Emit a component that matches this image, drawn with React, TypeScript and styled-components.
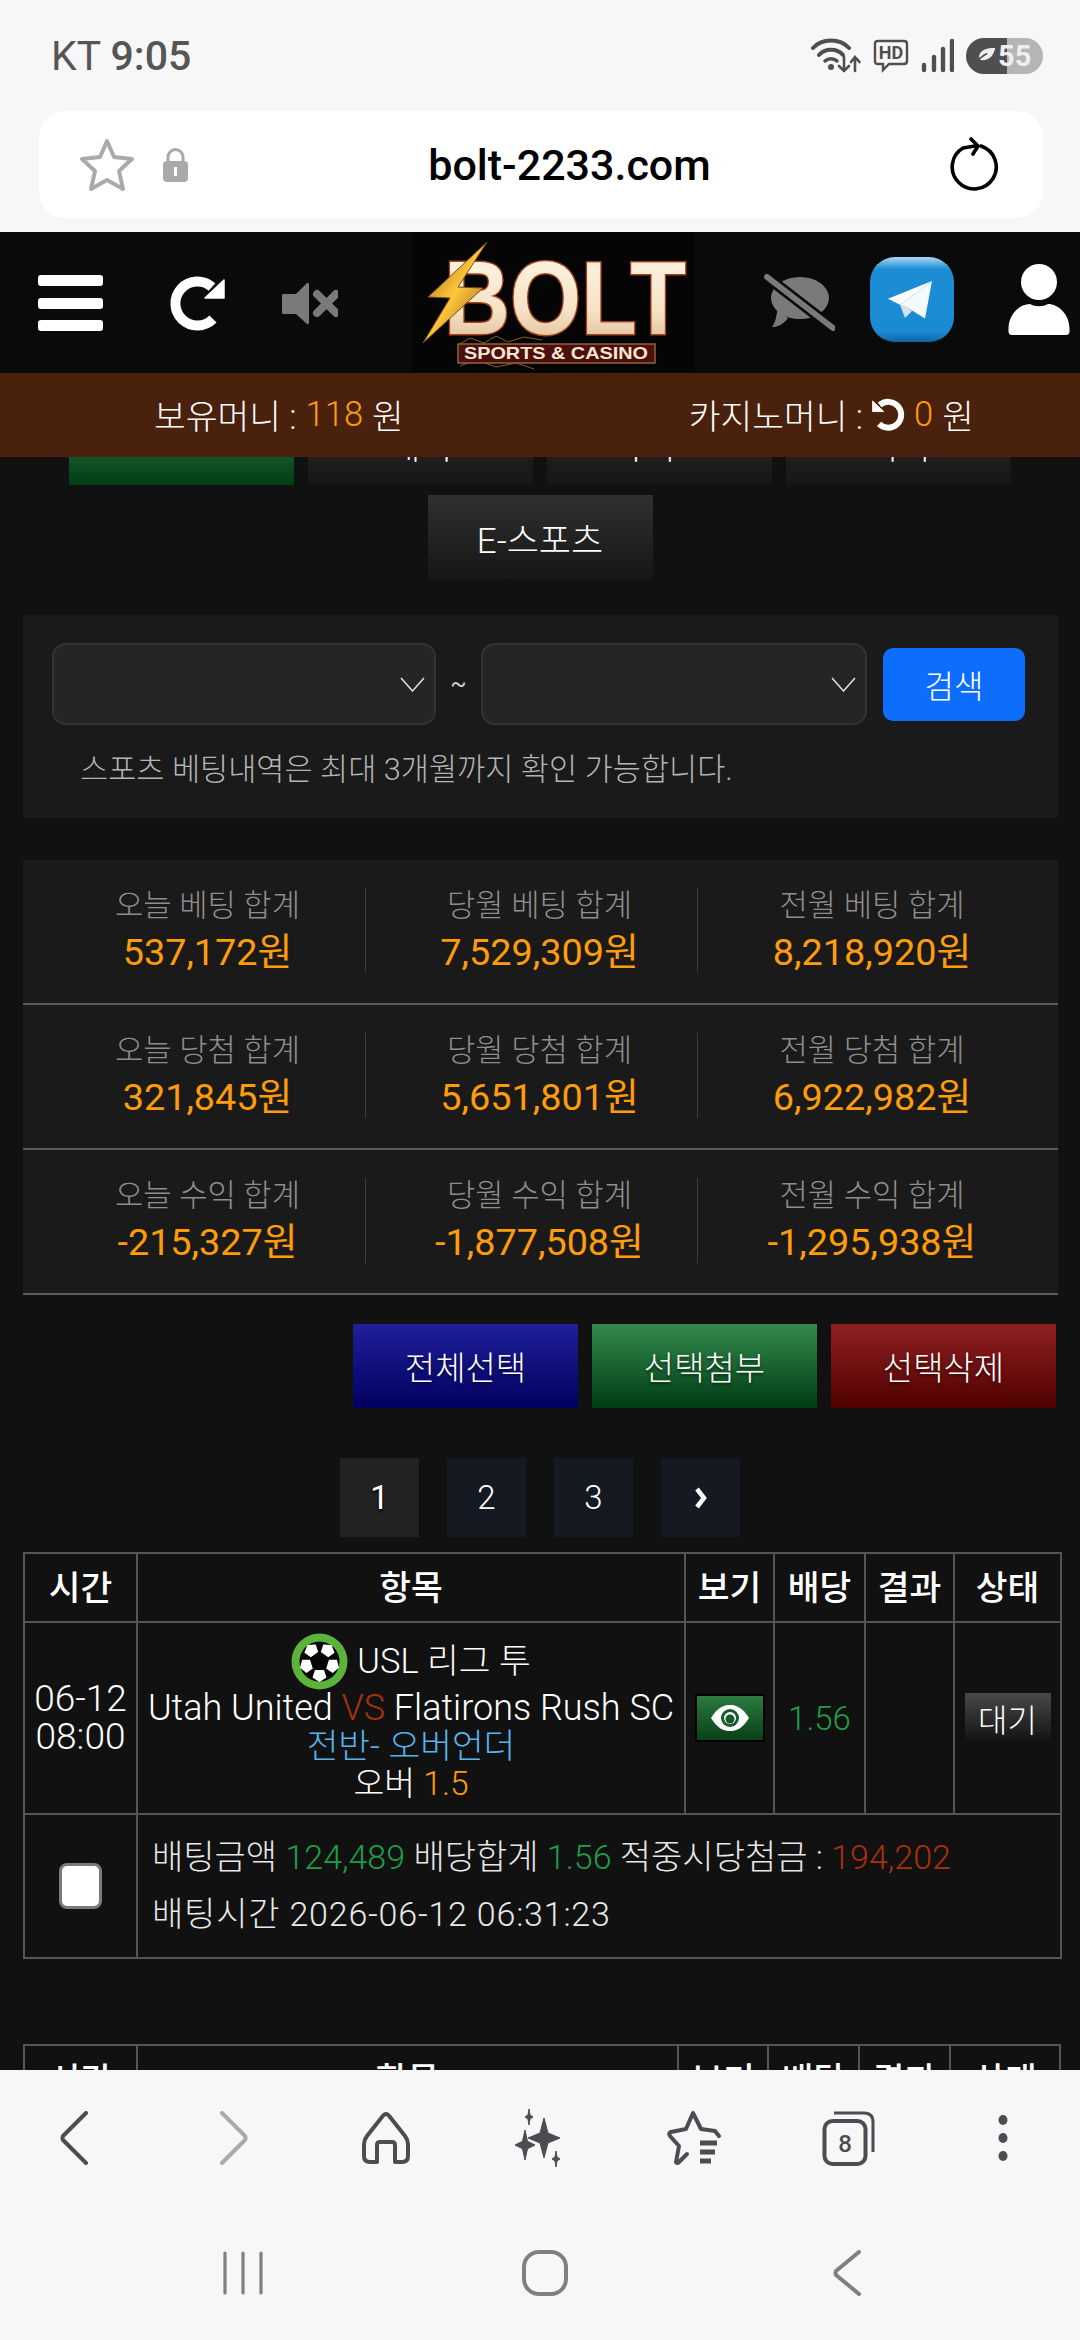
import styled, { createGlobalStyle } from "styled-components";

const GlobalStyle = createGlobalStyle`
  html, body {
    margin: 0;
    padding: 0;
    background: #111;
  }
  * {
    box-sizing: border-box;
  }
`;

const Screen = styled.div`
  width: 1080px;
  height: 2340px;
  display: flex;
  flex-direction: column;
  overflow: hidden;
  background: #111;
  color: #fff;
  font-family: Roboto, "Noto Sans CJK KR", sans-serif;
  font-weight: 300;
`;

/* browser chrome */
const Chrome = styled.div`
  height: 232px;
  flex: none;
  background: #f7f7f7;
  padding: 37px 37px 0 39px;
`;
const StatusRow = styled.div`
  height: 37px;
  display: flex;
  align-items: center;
  justify-content: space-between;
  padding-left: 12px;
  margin-bottom: 37px;
`;
const Carrier = styled.span`
  font-family: Roboto, sans-serif;
  font-size: 41px;
  font-weight: 400;
  color: #555;
  b {
    font-weight: 500;
  }
`;
const StatusIcons = styled.div`
  display: flex;
  align-items: center;
  gap: 12px;
`;
const Battery = styled.div`
  width: 77px;
  height: 36px;
  border-radius: 18px;
  display: flex;
  align-items: center;
  gap: 2px;
  padding-left: 9px;
  background: linear-gradient(90deg, #4f4f4f 53%, #b5b5b5 53%);
  font-family: Roboto, sans-serif;
  font-size: 29px;
  font-weight: 700;
  color: #efefef;
`;
const UrlBar = styled.div`
  height: 107px;
  background: #fff;
  border-radius: 26px;
  display: flex;
  align-items: center;
  padding: 0 43px 0 40px;
`;
const UrlText = styled.div`
  flex: 1;
  text-align: center;
  font-family: Roboto, sans-serif;
  font-size: 43px;
  font-weight: 500;
  color: #000;
`;
const Lock = styled.svg`
  margin-left: 27px;
`;

/* site header */
const Header = styled.header`
  height: 141px;
  flex: none;
  background: #0a0a0a;
  display: flex;
  align-items: center;
  padding-left: 38px;
`;
const HeaderSlot = styled.div<{ $gap?: number; $top?: number }>`
  display: flex;
  margin-left: ${(p) => p.$gap ?? 0}px;
  margin-top: ${(p) => p.$top ?? 0}px;
`;
const MoneyBar = styled.div`
  height: 84px;
  flex: none;
  background: #4a210c;
  display: flex;
  align-items: center;
  justify-content: space-between;
  padding: 0 106px 2px 154px;
  font-size: 34.5px;
  position: relative;
  z-index: 1;
`;
const MoneyItem = styled.div`
  display: flex;
  align-items: center;
  gap: 9px;
`;
const Amber = styled.span`
  color: #ff9c0a;
`;
const Green = styled.span`
  color: #1f9d48;
`;
const Red = styled.span`
  color: #a8300f;
`;

/* page content */
const Content = styled.main`
  flex: 1;
  min-height: 0;
  overflow: hidden;
`;
const Tabs = styled.div`
  margin-top: -56px;
  display: flex;
  flex-wrap: wrap;
  justify-content: center;
  gap: 10px 14px;
`;
const Tab = styled.div<{ $active?: boolean }>`
  width: 225px;
  height: 84px;
  display: flex;
  align-items: center;
  justify-content: center;
  font-size: 35px;
  background: ${(p) =>
    p.$active
      ? "linear-gradient(#338a4c, #003c14)"
      : "linear-gradient(#303030, #161616)"};
`;
const SearchPanel = styled.section`
  margin: 36px 22px 0 23px;
  height: 203px;
  background: #1a1a1a;
  padding: 28px 0 0 29px;
`;
const SearchRow = styled.div`
  display: flex;
  align-items: center;
`;
const DateSelect = styled.div<{ $wide?: boolean }>`
  width: ${(p) => (p.$wide ? 386 : 384)}px;
  height: 82px;
  background: #252525;
  border: 2px solid #333;
  border-radius: 14px;
  display: flex;
  align-items: center;
  justify-content: flex-end;
  padding-right: 9px;
`;
const Tilde = styled.span`
  width: 45px;
  text-align: center;
  font-size: 24px;
  font-weight: 400;
  color: #ccc;
`;
const SearchButton = styled.button`
  width: 142px;
  height: 73px;
  margin-left: 16px;
  border: 0;
  border-radius: 10px;
  background: #0d6efd;
  color: #fff;
  font: inherit;
  font-size: 32px;
`;
const Note = styled.p`
  margin: 26px 0 0 28px;
  font-size: 30.6px;
  line-height: 38px;
  color: #b4b4b4;
`;
const Stats = styled.section`
  margin: 42px 22px 0 23px;
  background: #1a1a1a;
`;
const StatRow = styled.div`
  height: 145px;
  display: grid;
  grid-template-columns: repeat(3, 332px);
  align-content: start;
  padding: 28px 0 0 11px;
  border-bottom: 2px solid #5a5a5a;
`;
const StatCell = styled.div`
  height: 85px;
  padding-left: 16px;
  text-align: center;
  border-right: 1px solid #3c3c3c;
  &:last-child {
    border-right: 0;
  }
`;
const StatLabel = styled.div`
  font-size: 30.8px;
  line-height: 36px;
  color: #8e8e8e;
`;
const StatValue = styled.div`
  margin-top: 5px;
  font-size: 37.8px;
  line-height: 46px;
  font-weight: 400;
  color: #ff9c0a;
`;
const Actions = styled.div`
  margin-top: 29px;
  padding-right: 24px;
  display: flex;
  justify-content: flex-end;
  gap: 14px;
`;
const ActionButton = styled.div<{ $from: string; $to: string }>`
  width: 225px;
  height: 84px;
  display: flex;
  align-items: center;
  justify-content: center;
  font-size: 33px;
  text-shadow: 0 2px 3px rgba(0, 0, 0, 0.6);
  background: linear-gradient(${(p) => p.$from}, ${(p) => p.$to});
`;
const Pager = styled.nav`
  margin-top: 50px;
  display: flex;
  justify-content: center;
  gap: 28px;
`;
const PageLink = styled.div<{ $active?: boolean }>`
  width: 79px;
  height: 79px;
  display: flex;
  align-items: center;
  justify-content: center;
  font-size: 33px;
  font-weight: ${(p) => (p.$active ? 400 : 300)};
  text-shadow: ${(p) => (p.$active ? "0 2px 3px #000" : "none")};
  background: ${(p) => (p.$active ? "#222" : "#151a22")};
`;

const BetTable = styled.table<{ $width: number; $gap: number }>`
  width: ${(p) => p.$width}px;
  margin: ${(p) => p.$gap}px 0 0 23px;
  border-collapse: collapse;
  table-layout: fixed;
  font-size: 33.5px;
`;
const Th = styled.th`
  height: 69px;
  border: 2px solid #555;
  font-weight: 500;
  font-size: 34.5px;
  padding: 0 0 5px;
`;
const Td = styled.td`
  height: 192px;
  border: 2px solid #555;
  padding: 0;
  text-align: center;
  vertical-align: middle;
`;
const CheckTd = styled(Td)`
  height: 144px;
`;
const DetailTd = styled(Td)`
  height: 144px;
  padding-left: 14px;
  text-align: left;
  color: #e8e8e8;
`;
const Lines = styled.div`
  line-height: 38px;
  white-space: nowrap;
`;
const DateLines = styled(Lines)`
  font-size: 37px;
`;
const LeagueLine = styled.div`
  display: flex;
  align-items: center;
  justify-content: center;
  height: 56px;
  gap: 9px;
  font-size: 34.5px;
`;
const Teams = styled.div`
  font-size: 36px;
`;
const Market = styled.div`
  font-size: 34.5px;
  color: #56b4ee;
`;
const Odds = styled(Green)`
  font-size: 33px;
`;
const EyeButton = styled.div`
  width: 70px;
  height: 48px;
  margin: 0 auto;
  border: 2px solid #000;
  background: linear-gradient(#2b7a3f, #0a4018);
  display: flex;
  align-items: center;
  justify-content: center;
`;
const StatusButton = styled.div`
  width: 86px;
  height: 50px;
  margin: 0 auto;
  display: flex;
  align-items: center;
  justify-content: center;
  font-size: 32px;
  background: linear-gradient(#484848, #111);
`;
const Check = styled.div`
  width: 43px;
  height: 46px;
  margin: 0 auto;
  background: #fff;
  border: 3px solid #7a7a7a;
  border-radius: 8px;
`;
const DetailLine = styled.div<{ $spaced?: boolean }>`
  height: 57px;
  line-height: 57px;
  white-space: nowrap;
  font-size: 34px;
  letter-spacing: ${(p) => (p.$spaced ? "0.8px" : "0")};
`;

/* browser bottom bars */
const BottomBar = styled.footer`
  height: 270px;
  flex: none;
  background: #f7f7f7;
  position: relative;
  z-index: 1;
`;
const NavRow = styled.div`
  height: 135px;
  display: grid;
  grid-template-columns: repeat(7, 1fr);
  align-items: center;
  justify-items: center;
`;
const NavSlot = styled.div<{ $shift: number }>`
  display: flex;
  margin-left: ${(p) => p.$shift}px;
`;
const SystemRow = styled.div`
  padding-left: 92px;
  display: grid;
  grid-template-columns: repeat(3, 302px);
  justify-items: center;
  align-items: center;
  height: 135px;
`;

const Col = styled.col<{ $w: number }>`
  width: ${(p) => p.$w}px;
`;

function WifiIcon() {
  return (
    <svg width="50" height="36" viewBox="0 0 50 36" fill="none" stroke="#4f4f4f" strokeLinecap="round">
      <path d="M2 10 C11 0 29 0 38 10" strokeWidth="4" />
      <path d="M8 17 C14 10 26 10 32 17" strokeWidth="4" />
      <path d="M14 23 C17 20 23 20 26 23" strokeWidth="3.5" />
      <circle cx="20" cy="29" r="3" fill="#4f4f4f" stroke="none" />
      <path d="M33 19 V33 M28 28 L33 33 L38 28" strokeWidth="2.6" />
      <path d="M44 33 V19 M40 24 L44 19 L48.500 24" strokeWidth="2.6" />
    </svg>
  );
}

function HdIcon() {
  return (
    <svg width="36" height="34" viewBox="0 0 36 34">
      <path d="M5 2 H31 Q34 2 34 5 V22 Q34 25 31 25 H16 L10 31 V25 H5 Q2 25 2 22 V5 Q2 2 5 2 Z" fill="none" stroke="#4f4f4f" strokeWidth="2.4" />
      <text x="18" y="20" textAnchor="middle" fontFamily="Roboto, sans-serif" fontWeight="700" fontSize="18" fill="#4f4f4f">HD</text>
    </svg>
  );
}

function SignalIcon() {
  return (
    <svg width="33" height="34" viewBox="0 0 33 34" stroke="#4f4f4f" strokeWidth="4.4" strokeLinecap="round">
      <path d="M3 26 V31 M13 18 V31 M22 10 V31 M31 2 V31" />
    </svg>
  );
}

function LeafIcon() {
  return (
    <svg width="21" height="18" viewBox="0 0 26 22">
      <path d="M25 1 C14 1 6 3 5 12 C5 14 6 15 7 16 C17 17 23 11 25 1 Z" fill="#efefef" />
      <path d="M1 21 C4 15 9 11 15 8" fill="none" stroke="#4f4f4f" strokeWidth="2" />
    </svg>
  );
}

function StarOutline() {
  return (
    <svg width="56" height="54" viewBox="0 0 56 54" fill="none" stroke="#aaa" strokeWidth="4" strokeLinejoin="round">
      <path d="M28 3 L35 19 L53 21 L40 33 L44 51 L28 42 L12 51 L16 33 L3 21 L21 19 Z" />
    </svg>
  );
}

function ReloadOutline() {
  return (
    <svg width="50" height="56" viewBox="0 0 50 56" fill="none" stroke="#000" strokeWidth="3.6" strokeLinecap="round" strokeLinejoin="round">
      <path d="M31 9 A22 22 0 1 1 13 11 L25 9" />
      <path d="M21 2 L28 9 L23 17" />
    </svg>
  );
}

function BoltLogo() {
  return (
    <svg width="283" height="141" viewBox="0 0 283 141">
      <defs>
        <linearGradient id="cream" x1="0" y1="0" x2="0" y2="1">
          <stop offset="0" stopColor="#fff8ea" />
          <stop offset="0.6" stopColor="#f6e2c6" />
          <stop offset="1" stopColor="#d9b48e" />
        </linearGradient>
        <linearGradient id="gold" x1="0" y1="0" x2="1" y2="1">
          <stop offset="0" stopColor="#8f5a14" />
          <stop offset="0.5" stopColor="#ffc53d" />
          <stop offset="1" stopColor="#8a5612" />
        </linearGradient>
      </defs>
      <rect width="283" height="141" fill="#050505" />
      <path d="M48 112 L58 106 L72 111 L84 104 L96 110 L112 105 L130 108 M48 134 L64 128 L84 135 L104 131 L122 137" fill="none" stroke="#8a5c1c" strokeWidth="1" />
      <text x="32" y="102" fontFamily="Liberation Sans, sans-serif" fontWeight="700" fontSize="103" textLength="242" lengthAdjust="spacingAndGlyphs" fill="url(#cream)" stroke="#a3431b" strokeWidth="3" paintOrder="stroke">BOLT</text>
      <path d="M75 10 L16 65 L38 66 L11 111 L71 56 L46 55 Z" fill="url(#gold)" stroke="#7a4a10" strokeWidth="1" />
      <rect x="46" y="112" width="197" height="19" fill="#4d0f0c" stroke="#8d6240" strokeWidth="1.5" />
      <text x="52" y="127" fontFamily="Liberation Sans, sans-serif" fontWeight="700" fontSize="17" textLength="184" lengthAdjust="spacingAndGlyphs" fill="#f6e6d2">SPORTS &amp; CASINO</text>
    </svg>
  );
}

function HamburgerIcon() {
  return (
    <svg width="65" height="56" viewBox="0 0 65 56" fill="#fff">
      <rect width="65" height="11" rx="3" />
      <rect y="23" width="65" height="11" rx="3" />
      <rect y="45" width="65" height="11" rx="3" />
    </svg>
  );
}

function ReloadSolid({ size, flip }: { size: number; flip?: boolean }) {
  return (
    <svg width={size} height={size} viewBox="0 0 56 56" style={flip ? { transform: "scaleX(-1)" } : undefined}>
      <path d="M44 44 A22 22 0 1 1 43 12" fill="none" stroke="#fff" strokeWidth="10" />
      <path d="M55 5 V23 H36 Z" fill="#fff" stroke="#fff" strokeWidth="1.500" strokeLinejoin="round" />
    </svg>
  );
}

function MuteIcon() {
  return (
    <svg width="57" height="44" viewBox="0 0 57 44" fill="#7a7a7a">
      <path d="M1 13 Q1 12 2 12 H15 L26 1 Q28 0 28 3 V40 Q28 43 26 42 L15 32 H2 Q1 32 1 31 Z" />
      <path d="M36 12 L55 31 M55 12 L36 31" stroke="#7a7a7a" strokeWidth="8" strokeLinecap="round" />
    </svg>
  );
}

function ChatOffIcon() {
  return (
    <svg width="71" height="57" viewBox="0 0 71 57" fill="#7a7a7a">
      <ellipse cx="36" cy="24" rx="29" ry="21" />
      <path d="M14 34 L24 44 C18 52 12 53 8 53 C12 48 12 42 14 34 Z" />
      <path d="M3 3 L69 54" stroke="#0a0a0a" strokeWidth="11" />
      <path d="M3 3 L69 54" stroke="#7a7a7a" strokeWidth="6" strokeLinecap="round" />
    </svg>
  );
}

function TelegramIcon() {
  return (
    <svg width="84" height="85" viewBox="0 0 84 85">
      <defs>
        <linearGradient id="tgShine" x1="0" y1="0" x2="0" y2="1">
          <stop offset="0" stopColor="#a9d8f5" />
          <stop offset="0.14" stopColor="#1d8ed6" />
          <stop offset="0.88" stopColor="#1a8ad2" />
          <stop offset="1" stopColor="#1164a4" />
        </linearGradient>
      </defs>
      <rect width="84" height="85" rx="25" fill="url(#tgShine)" />
      <path d="M30 47.700 L35 61 L42 54 L38 51 Z" fill="#d2e2ee" />
      <path d="M62 24 L18 41.700 L30 47.700 Z" fill="#fff" />
      <path d="M62 24 L30 47.700 L38 51 L55 61.500 Z" fill="#f4f9fc" />
    </svg>
  );
}

function UserIcon() {
  return (
    <svg width="62" height="71" viewBox="0 0 62 71" fill="#fff">
      <circle cx="31" cy="18" r="18" />
      <path d="M4 71 Q0 71 0.500 66 C0 50 12 40 22 40 C27 43 35 43 40 40 C50 40 62 50 61.500 66 Q62 71 58 71 Z" />
    </svg>
  );
}

function Chevron() {
  return (
    <svg width="25" height="15" viewBox="0 0 25 15" fill="none" stroke="#e4e4e4" strokeWidth="1.500">
      <path d="M1 1 L12.500 14 L24 1" />
    </svg>
  );
}

const pentagons = [0, 72, 144, 216, 288];

function BallIcon() {
  return (
    <svg width="57" height="57" viewBox="0 0 57 57">
      <circle cx="28.500" cy="28.500" r="28" fill="#5cb33b" />
      <circle cx="28.500" cy="28.500" r="20" fill="#050505" />
      {pentagons.map((angle) => (
        <path
          key={angle}
          d="M28.500 8 L35.500 12.500 L33 20 L24 20 L21.500 12.500 Z"
          fill="#fff"
          transform={`rotate(${angle + 36} 28.500 28.500)`}
        />
      ))}
    </svg>
  );
}

function EyeIcon() {
  return (
    <svg width="40" height="28" viewBox="0 0 40 28">
      <path d="M1 14 C8 3 14 1 20 1 C26 1 32 3 39 14 C32 25 26 27 20 27 C14 27 8 25 1 14 Z" fill="#fff" />
      <circle cx="20" cy="14" r="9" fill="#155c2a" />
      <circle cx="20" cy="14" r="6" fill="#fff" />
      <circle cx="20" cy="15" r="4.500" fill="#155c2a" />
    </svg>
  );
}

function NavChevron({ color, flip, height }: { color: string; flip?: boolean; height: number }) {
  return (
    <svg width="28" height={height} viewBox={`0 0 28 ${height}`} fill="none" stroke={color} strokeWidth="4" strokeLinecap="round" strokeLinejoin="round" style={flip ? { transform: "scaleX(-1)" } : undefined}>
      <path d={`M26 2 L3 ${height / 2 - 2} Q2 ${height / 2} 3 ${height / 2 + 2} L26 ${height - 2}`} />
    </svg>
  );
}

function HomeIcon() {
  return (
    <svg width="50" height="54" viewBox="0 0 50 54" fill="none" stroke="#4c4c52" strokeWidth="4" strokeLinejoin="round">
      <path d="M25 3 Q23 3 21 6 L6 25 Q3 29 3 33 V45 Q3 51 9 51 H16 V34 Q16 31 19 31 H31 Q34 31 34 34 V51 H41 Q47 51 47 45 V33 Q47 29 44 25 L29 6 Q27 3 25 3 Z" />
    </svg>
  );
}

const star4 = (cx: number, cy: number, w: number, h: number) =>
  `M${cx} ${cy - h} L${cx + w * 0.25} ${cy - h * 0.25} L${cx + w} ${cy} L${cx + w * 0.25} ${cy + h * 0.25} L${cx} ${cy + h} L${cx - w * 0.25} ${cy + h * 0.25} L${cx - w} ${cy} L${cx - w * 0.25} ${cy - h * 0.25} Z`;

function SparkleIcon() {
  return (
    <svg width="60" height="62" viewBox="0 0 60 62" fill="#4c4c52" stroke="#4c4c52" strokeWidth="1">
      <path d={star4(34, 31, 16, 20)} />
      <path d={star4(15, 38, 10, 15)} />
      <path d={star4(19, 10, 4, 8)} />
      <path d={star4(46, 52, 4, 8)} />
    </svg>
  );
}

function StarListIcon() {
  return (
    <svg width="58" height="56" viewBox="0 0 58 56" fill="none" stroke="#4c4c52" strokeWidth="4" strokeLinecap="round" strokeLinejoin="round">
      <path d="M54 26 L50 21 L36 19 L28 3 L21 19 L6 22 Q3 23 5 26 L14 36 L11 52 Q12 54 14 52 L22 44" />
      <path d="M35 33 H52 M35 42 H50 M35 51 H46" strokeWidth="5" strokeLinecap="butt" />
    </svg>
  );
}

function TabsIcon() {
  return (
    <svg width="54" height="56" viewBox="0 0 54 56">
      <rect x="2.500" y="11" width="41" height="43" rx="8" fill="none" stroke="#4c4c52" strokeWidth="4" />
      <path d="M12 3 H42 Q51 3 51 12 V42" fill="none" stroke="#4c4c52" strokeWidth="3" />
      <text x="23" y="42" textAnchor="middle" fontFamily="Roboto, sans-serif" fontSize="24" fontWeight="500" fill="#4c4c52">8</text>
    </svg>
  );
}

function DotsIcon() {
  return (
    <svg width="12" height="48" viewBox="0 0 12 48" fill="#4c4c52">
      <ellipse cx="6" cy="6" rx="4.500" ry="5" />
      <ellipse cx="6" cy="24" rx="4.500" ry="5" />
      <ellipse cx="6" cy="42" rx="4.500" ry="5" />
    </svg>
  );
}

function RecentsIcon() {
  return (
    <svg width="40" height="44" viewBox="0 0 40 44" stroke="#808080" strokeWidth="3.200" strokeLinecap="round">
      <path d="M2 2 V42 M20 2 V42 M38 2 V42" />
    </svg>
  );
}

function SystemHomeIcon() {
  return (
    <svg width="46" height="46" viewBox="0 0 46 46" fill="none" stroke="#808080" strokeWidth="4">
      <rect x="2" y="2" width="42" height="42" rx="15" />
    </svg>
  );
}

const headers = ["시간", "항목", "보기", "배당", "결과", "상태"];

function TableHead() {
  return (
    <thead>
      <tr>
        {headers.map((label) => (
          <Th key={label}>{label}</Th>
        ))}
      </tr>
    </thead>
  );
}

const stats = [
  [
    ["오늘 베팅 합계", "537,172원"],
    ["당월 베팅 합계", "7,529,309원"],
    ["전월 베팅 합계", "8,218,920원"],
  ],
  [
    ["오늘 당첨 합계", "321,845원"],
    ["당월 당첨 합계", "5,651,801원"],
    ["전월 당첨 합계", "6,922,982원"],
  ],
  [
    ["오늘 수익 합계", "-215,327원"],
    ["당월 수익 합계", "-1,877,508원"],
    ["전월 수익 합계", "-1,295,938원"],
  ],
];

export default function App() {
  return (
    <Screen>
      <GlobalStyle />
      <Chrome>
        <StatusRow>
          <Carrier>
            KT <b>9:05</b>
          </Carrier>
          <StatusIcons>
            <WifiIcon />
            <HdIcon />
            <SignalIcon />
            <Battery>
              <LeafIcon />
              55
            </Battery>
          </StatusIcons>
        </StatusRow>
        <UrlBar>
          <StarOutline />
          <Lock width="27" height="36" viewBox="0 0 27 36">
            <path d="M6 15 V10 A7.500 7.500 0 0 1 21 10 V15" fill="none" stroke="#aaa" strokeWidth="3" />
            <rect x="1" y="14" width="25" height="21" rx="4" fill="#aaa" />
            <rect x="12" y="20" width="3" height="9" fill="#fff" />
          </Lock>
          <UrlText>bolt-2233.com</UrlText>
          <ReloadOutline />
        </UrlBar>
      </Chrome>

      <Header>
        <HamburgerIcon />
        <HeaderSlot $gap={66}>
          <ReloadSolid size={56} />
        </HeaderSlot>
        <HeaderSlot $gap={56} $top={2}>
          <MuteIcon />
        </HeaderSlot>
        <HeaderSlot $gap={74}>
          <BoltLogo />
        </HeaderSlot>
        <HeaderSlot $gap={69}>
          <ChatOffIcon />
        </HeaderSlot>
        <HeaderSlot $gap={35} $top={-6}>
          <TelegramIcon />
        </HeaderSlot>
        <HeaderSlot $gap={54} $top={-7}>
          <UserIcon />
        </HeaderSlot>
      </Header>

      <MoneyBar>
        <MoneyItem>
          <span>보유머니 :</span>
          <Amber>118</Amber>
          <span>원</span>
        </MoneyItem>
        <MoneyItem>
          <span>카지노머니 :</span>
          <ReloadSolid size={33} flip />
          <Amber>0</Amber>
          <span>원</span>
        </MoneyItem>
      </MoneyBar>

      <Content>
        <Tabs>
          <Tab $active />
          <Tab>해외</Tab>
          <Tab>카지노</Tab>
          <Tab>미니</Tab>
          <Tab>E-스포츠</Tab>
        </Tabs>

        <SearchPanel>
          <SearchRow>
            <DateSelect>
              <Chevron />
            </DateSelect>
            <Tilde>~</Tilde>
            <DateSelect $wide>
              <Chevron />
            </DateSelect>
            <SearchButton>검색</SearchButton>
          </SearchRow>
          <Note>스포츠 베팅내역은 최대 3개월까지 확인 가능합니다.</Note>
        </SearchPanel>

        <Stats>
          {stats.map((row) => (
            <StatRow key={row[0][0]}>
              {row.map(([label, value]) => (
                <StatCell key={label}>
                  <StatLabel>{label}</StatLabel>
                  <StatValue>{value}</StatValue>
                </StatCell>
              ))}
            </StatRow>
          ))}
        </Stats>

        <Actions>
          <ActionButton $from="#20209a" $to="#000060">전체선택</ActionButton>
          <ActionButton $from="#338a4c" $to="#003c14">선택첨부</ActionButton>
          <ActionButton $from="#8f2020" $to="#500000">선택삭제</ActionButton>
        </Actions>

        <Pager>
          <PageLink $active>1</PageLink>
          <PageLink>2</PageLink>
          <PageLink>3</PageLink>
          <PageLink>
            <svg width="14" height="22" viewBox="0 0 14 22" fill="none" stroke="#fff" strokeWidth="4.500">
              <path d="M3 2 L10 11 L3 20" />
            </svg>
          </PageLink>
        </Pager>

        <BetTable $width={1037} $gap={15}>
          <colgroup>
            <Col $w={113} />
            <Col $w={548} />
            <Col $w={89} />
            <Col $w={91} />
            <Col $w={89} />
            <Col $w={107} />
          </colgroup>
          <TableHead />
          <tbody>
            <tr>
              <Td>
                <DateLines>
                  06-12
                  <br />
                  08:00
                </DateLines>
              </Td>
              <Td>
                <Lines>
                  <LeagueLine>
                    <BallIcon />
                    USL 리그 투
                  </LeagueLine>
                  <Teams>
                    Utah United <Red>VS</Red> Flatirons Rush SC
                  </Teams>
                  <Market>전반- 오버언더</Market>
                  <div>
                    오버 <Amber>1.5</Amber>
                  </div>
                </Lines>
              </Td>
              <Td>
                <EyeButton>
                  <EyeIcon />
                </EyeButton>
              </Td>
              <Td>
                <Odds>1.56</Odds>
              </Td>
              <Td />
              <Td>
                <StatusButton>대기</StatusButton>
              </Td>
            </tr>
            <tr>
              <CheckTd>
                <Check />
              </CheckTd>
              <DetailTd colSpan={5}>
                <DetailLine>
                  배팅금액 <Green>124,489</Green> 배당합계 <Green>1.56</Green> 적중시당첨금 : <Red>194,202</Red>
                </DetailLine>
                <DetailLine $spaced>배팅시간 2026-06-12 06:31:23</DetailLine>
              </DetailTd>
            </tr>
          </tbody>
        </BetTable>

        <BetTable $width={1036} $gap={85}>
          <colgroup>
            <Col $w={113} />
            <Col $w={541} />
            <Col $w={90} />
            <Col $w={91} />
            <Col $w={91} />
            <Col $w={110} />
          </colgroup>
          <TableHead />
        </BetTable>
      </Content>

      <BottomBar>
        <NavRow>
          <NavSlot $shift={-6}>
            <NavChevron color="#4c4c52" height={54} />
          </NavSlot>
          <NavSlot $shift={6}>
            <NavChevron color="#aaa" height={54} flip />
          </NavSlot>
          <HomeIcon />
          <SparkleIcon />
          <StarListIcon />
          <TabsIcon />
          <DotsIcon />
        </NavRow>
        <SystemRow>
          <RecentsIcon />
          <SystemHomeIcon />
          <NavChevron color="#808080" height={46} />
        </SystemRow>
      </BottomBar>
    </Screen>
  );
}
